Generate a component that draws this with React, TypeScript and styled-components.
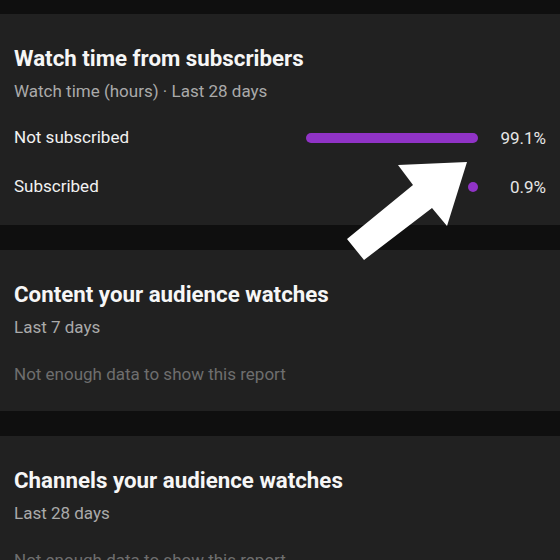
import React from 'react';
import styled, { createGlobalStyle } from 'styled-components';

const GlobalStyle = createGlobalStyle`
  body {
    margin: 0;
    background-color: #0f0f0f;
    font-family: Roboto, 'Noto Sans', 'Liberation Sans', sans-serif;
    -webkit-font-smoothing: antialiased;
  }
`;

const Page = styled.div`
  position: relative;
  display: flex;
  flex-direction: column;
  row-gap: 25px;
  padding-top: 14px;
  height: 560px;
  overflow: hidden;
`;

const Card = styled.section<{ $bottom?: number }>`
  background-color: #212121;
  padding: 30px 14px ${(p) => p.$bottom ?? 25}px 14px;
  display: flex;
  flex-direction: column;
`;

const Title = styled.h2`
  margin: 0;
  font-size: 22.3px;
  line-height: 28px;
  font-weight: 700;
  color: #f6f6f6;
`;

const Subtitle = styled.div`
  margin-top: 7px;
  font-size: 17px;
  line-height: 24px;
  color: #aaaaaa;
`;

const Empty = styled.div`
  margin-top: 23px;
  font-size: 17px;
  line-height: 24px;
  color: #6e6e6e;
`;

const Rows = styled.div`
  margin-top: 9px;
  display: flex;
  flex-direction: column;
`;

const Row = styled.div`
  display: grid;
  grid-template-columns: 1fr 174px 68px;
  align-items: center;
  height: 49px;
`;

const Label = styled.span`
  font-size: 17px;
  line-height: 24px;
  color: #f1f1f1;
`;

const Track = styled.div`
  display: flex;
  justify-content: flex-end;
  margin-top: 2px;
`;

const Bar = styled.div`
  height: 10px;
  min-width: 10px;
  border-radius: 5px;
  background-color: #9033c6;
`;

const Percent = styled.span`
  font-size: 17px;
  line-height: 24px;
  margin-top: 3px;
  text-align: right;
  color: #e6e6e6;
`;

const Arrow = styled.svg`
  position: absolute;
  left: 0;
  top: 0;
  pointer-events: none;
`;

const rows = [
  { label: 'Not subscribed', value: 99.1 },
  { label: 'Subscribed', value: 0.9 },
];

const App: React.FC = () => {
  return (
    <>
      <GlobalStyle />
      <Page>
        <Card $bottom={15}>
          <Title>Watch time from subscribers</Title>
          <Subtitle>Watch time (hours) · Last 28 days</Subtitle>
          <Rows>
            {rows.map((r) => (
              <Row key={r.label}>
                <Label>{r.label}</Label>
                <Track>
                  <Bar style={{ width: `${r.value}%` }} />
                </Track>
                <Percent>{r.value}%</Percent>
              </Row>
            ))}
          </Rows>
        </Card>
        <Card>
          <Title>Content your audience watches</Title>
          <Subtitle>Last 7 days</Subtitle>
          <Empty>Not enough data to show this report</Empty>
        </Card>
        <Card>
          <Title>Channels your audience watches</Title>
          <Subtitle>Last 28 days</Subtitle>
          <Empty>Not enough data to show this report</Empty>
        </Card>
        <Arrow width="560" height="560" viewBox="0 0 560 560">
          <polygon
            points="467,162 398,165 413,185 347,239 364,260 432,208 447,226"
            fill="#ffffff"
          />
        </Arrow>
      </Page>
    </>
  );
};

export default App;
